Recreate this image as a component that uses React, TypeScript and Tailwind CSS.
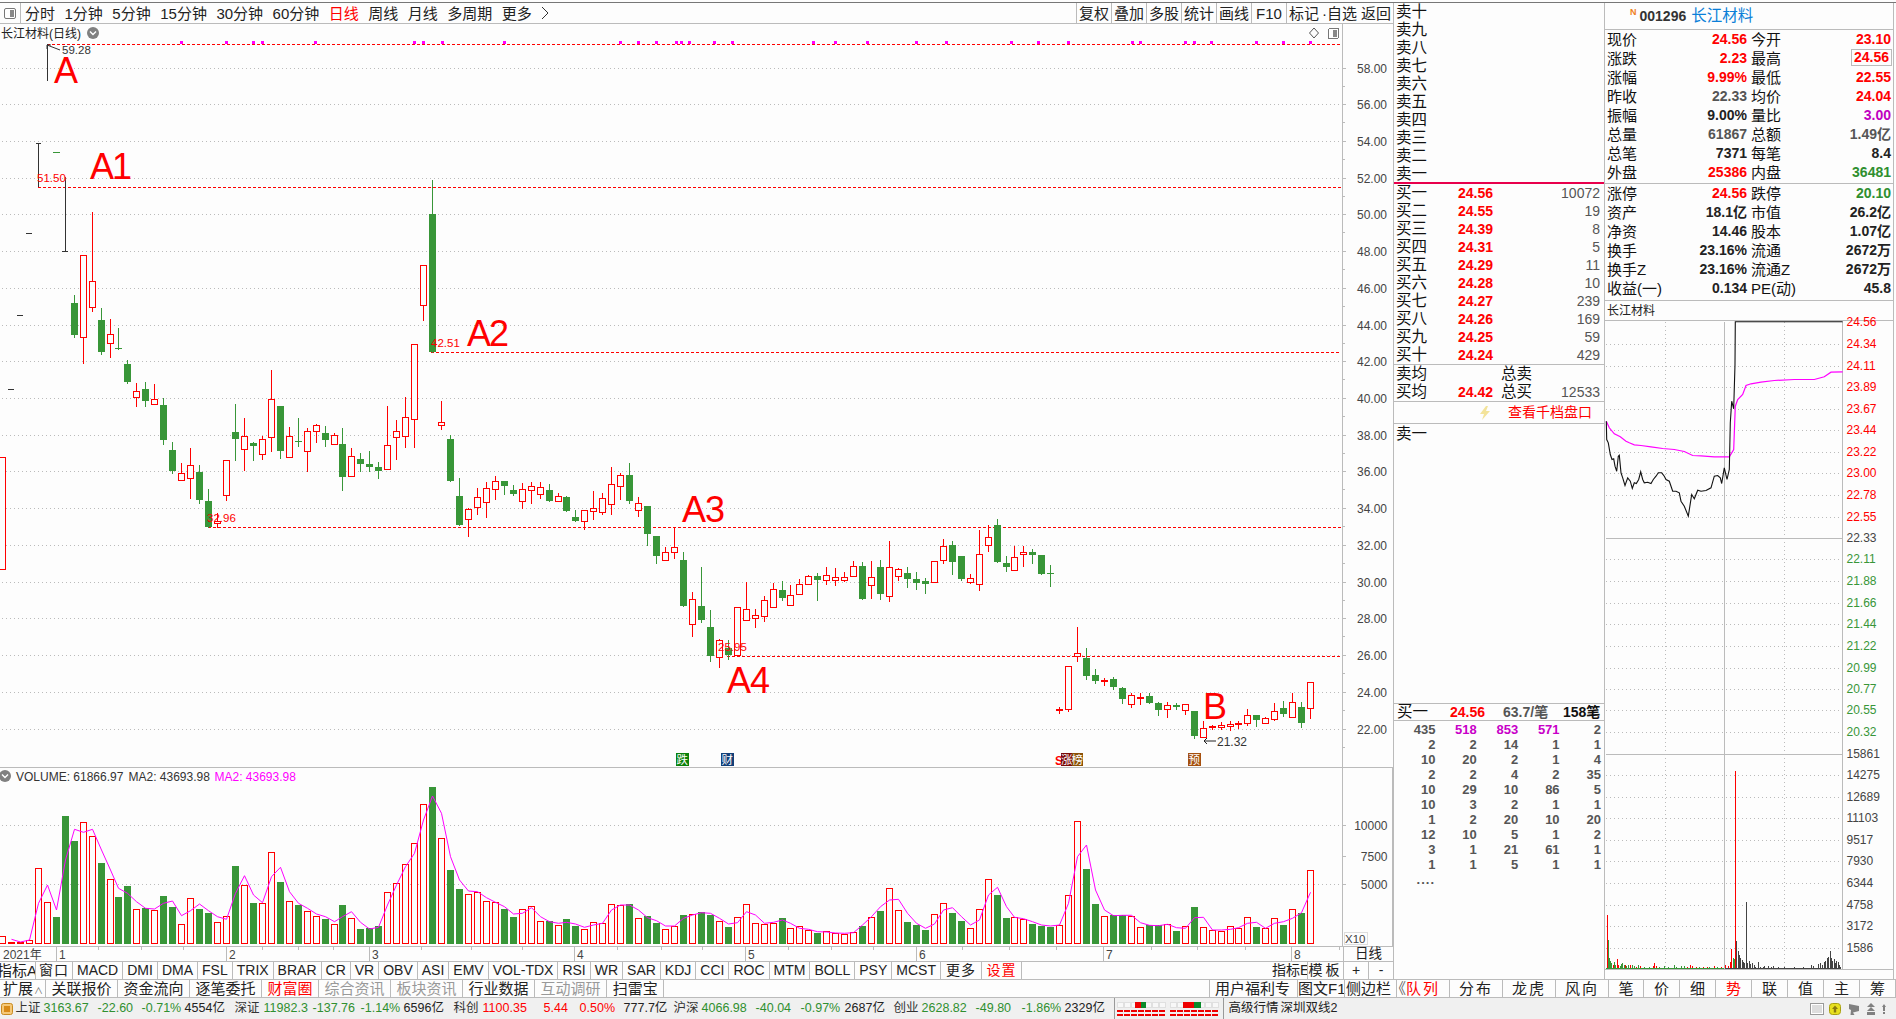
const RED = "#ff0000";
const GREEN = "#389638";
const DARK = "#444444";
const BG = "#fdfdfd";

type Candle = [string, number, number, number, number];

// each block: pixel y of the crop origin, first candle index, [kind, wick top, body top, body bottom, wick bottom] at 3x
const blocks: [number, number, Candle[]][] = [
  [170, 8, [
    ["g",375,400,495,500],["r",256,256,500,580],["r",127,334,410,422],["g",415,450,545,551],["r",447,492,520,560],["g",474,535,536,536],
    ["g",570,582,636,639],["r",640,664,680,707],["g",636,657,693,707],["r",642,688,703,703],["g",685,705,809,821],["g",817,840,903,908],
    ["r",880,910,931,931],["r",835,886,925,983],["g",885,906,990,998],["g",957,993,1071,1071],["r",1030,1053,1060,1070],["r",871,871,976,990],
    ["g",702,786,806,869],["r",745,799,838,900],["g",815,820,827,869],["r",799,808,853,866],["r",600,688,802,842],["g",708,708,842,863],
    ["r",771,799,862,862],["g",744,814,815,827],["r",775,784,844,903],["r",762,766,784,815],["g",769,789,809,827],["r",790,796,823,823],
    ["g",775,822,920,959],["r",835,859,919,919],["g",849,867,881,902],["g",843,882,890,902],["g",876,891,902,923],["r",708,826,898,898],
    ["r",750,784,802,866],["r",682,740,799,830],["r",523,523,748,830],["r",286,286,406,449],["g",30,132,545,546],["r",693,757,766,776],
    ["g",796,807,932,932],["g",924,978,1064,1064],["r",1015,1018,1048,1097],["r",955,982,1012,1031],
  ]],
  [340, 54, [
    ["r",427,445,485,531],["r",408,424,448,476],["g",423,423,437,462],["g",435,450,461,466],["r",430,448,484,504],["r",427,439,451,489],
    ["r",426,442,463,473],["g",432,450,482,484],["r",460,467,484,484],["g",468,472,512,513],["g",510,531,542,542],["r",511,511,544,566],
    ["r",453,503,514,537],["r",460,475,517,521],["r",381,433,493,521],["r",399,406,439,476],["g",369,405,483,489],["r",472,490,511,527],
    ["g",498,498,581,614],["g",588,588,648,668],["r",621,637,661,661],["r",563,622,637,653],["g",637,660,797,797],["r",756,778,853,887],
  ]],
  [480, 78, [
    ["g",262,378,420,425],["g",390,441,527,543],["r",478,481,530,560],["g",480,505,525,537],["r",382,382,524,524],["r",305,388,419,419],
    ["r",387,405,413,441],["r",349,361,409,422],["r",309,328,380,380],["g",304,330,354,360],["r",316,346,374,374],["r",297,313,343,343],
    ["r",285,289,313,313],["g",280,288,299,360],["r",262,286,301,311],["r",265,292,301,315],["r",276,290,299,302],["r",243,259,289,289],
    ["g",246,258,356,356],["r",243,292,316,354],["g",240,261,341,356],["r",183,262,349,362],
  ]],
  [510, 100, [
    ["r",174,178,199,211],["g",171,189,206,231],["g",186,207,219,237],["g",205,213,221,248],["r",152,154,217,217],["r",87,109,151,158],
    ["g",93,105,155,192],["g",138,138,207,209],["r",192,205,217,220],["r",60,133,223,239],["r",45,82,106,122],["g",27,45,155,155],
    ["g",138,160,170,182],["r",108,142,181,181],["r",108,127,133,167],["g",118,126,134,159],["g",135,135,191,191],["g",166,190,191,227],
    ["r",590,597,600,608],["r",469,469,596,602],["r",351,430,438,452],["g",414,444,497,506],["g",477,495,513,518],["r",503,510,514,524],
    ["g",502,507,530,537],["g",531,534,567,578],["r",549,556,581,590],["r",548,562,564,581],["g",549,558,578,578],["g",576,579,600,614],
    ["r",576,586,598,620],["g",580,586,590,598],["r",583,583,601,611],["g",603,603,678,683],["r",633,655,680,680],["r",645,648,652,657],
    ["r",636,645,650,656],["r",632,642,648,659],["r",634,639,643,654],["r",597,616,640,644],["g",616,616,630,647],["r",622,625,640,640],
    ["r",579,602,626,629],["g",573,595,611,618],["r",549,577,622,622],["g",576,591,638,651],["r",517,517,595,624],
  ]],
];

const candleX = (i: number) => Math.round(2 + 8.96 * i);

// volume bars: i = 0..146, top at 3x from y=760, negative means green
const vols = [529,547,547,541,325,427,-471,-168,-243,187,229,-309,358,-411,-378,448,-445,451,-408,-441,493,415,-447,-459,487,468,-318,376,-429,430,277,-366,424,-435,454,469,-477,493,-435,475,-507,-505,-498,397,370,313,250,133,-81,235,-330,-387,403,395,424,427,-447,-471,448,439,484,-483,495,-477,-498,508,487,490,433,436,-432,475,-468,-489,508,498,-465,463,-456,-465,484,-500,472,433,490,493,488,-474,505,499,511,-519,514,519,522,517,-498,472,-453,385,451,-486,-495,-510,463,430,-459,-483,505,448,358,-405,-474,472,476,-492,-497,-501,495,406,184,-327,-432,469,-465,-466,468,502,-496,-496,493,-513,498,-441,502,510,513,499,505,472,-501,505,475,-495,448,-459,331];

const volMa = [538,546,540,430,375,450,300,208,217,208,270,330,385,400,425,445,447,430,423,467,452,432,452,470,478,400,347,405,428,350,322,395,430,445,462,470,485,470,455,487,507,502,435,375,320,280,180,108,160,290,360,393,395,413,427,440,462,460,443,470,485,490,487,492,502,495,490,450,435,435,450,473,482,498,498,475,465,458,460,475,492,488,455,465,490,487,480,490,505,508,515,516,519,520,518,495,470,440,420,418,460,490,505,492,450,443,470,495,480,405,382,440,472,476,485,495,498,495,430,290,255,390,450,467,466,466,488,496,497,493,503,505,473,472,510,510,508,503,490,487,505,490,485,475,458,397];

const gridY = [68,104,141,178,214,251,288,325,361,398,435,471,508,545,582,618,655,692,729];
const priceLabels = ["58.00","56.00","54.00","52.00","50.00","48.00","46.00","44.00","42.00","40.00","38.00","36.00","34.00","32.00","30.00","28.00","26.00","24.00","22.00"];
const pinkMarks = [180,225,252,261,314,413,422,441,503,619,637,655,675,680,688,713,731,812,834,866,915,945,1010,1037,1067,1131,1139,1184,1193,1210,1255,1282,1309];

const bigMarks: [string, number, number][] = [["A",54,83],["A1",90,179],["A2",467,346],["A3",682,522],["A4",727,693],["B",1203,719]];

const toolbarItems = ["分时","1分钟","5分钟","15分钟","30分钟","60分钟","日线","周线","月线","多周期","更多"];
const toolbarRight = ["复权","叠加","多股","统计","画线","F10","标记"];

function PanelIcon({ x, y }: { x: number; y: number }) {
  return (
    <g shapeRendering="crispEdges">
      <rect x={x + 0.5} y={y + 0.5} width={10} height={10} rx={1.5} fill="#fff" stroke="#777" />
      <rect x={x + 5} y={y + 2} width={4} height={7} fill="#888" />
    </g>
  );
}

function Chevron({ cx, cy }: { cx: number; cy: number }) {
  return (
    <g>
      <circle cx={cx} cy={cy} r={6} fill="#808080" />
      <path d={`M${cx - 3} ${cy - 1.5}L${cx} ${cy + 1.5}L${cx + 3} ${cy - 1.5}`} stroke="#fff" strokeWidth={1.4} fill="none" />
    </g>
  );
}

function Candles() {
  const out: React.ReactNode[] = [];
  blocks.forEach(([origin, start, rows]) => {
    rows.forEach((c, n) => {
      const x = candleX(start + n);
      const y = (v: number) => Math.round(origin + v / 3);
      const [kind, w, t, b, l] = c;
      const color = kind === "g" ? GREEN : RED;
      out.push(
        <g key={start + n} shapeRendering="crispEdges">
          <line x1={x + 0.5} x2={x + 0.5} y1={y(w)} y2={y(l) + 1} stroke={color} />
          {kind === "g" ? (
            <rect x={x - 3} y={y(t)} width={7} height={Math.max(y(b) - y(t), 1)} fill={color} />
          ) : (
            <rect x={x - 2.5} y={y(t) + 0.5} width={6} height={Math.max(y(b) - y(t), 1)} fill={BG} stroke={color} />
          )}
        </g>
      );
    });
  });
  return <>{out}</>;
}

function KLine() {
  return (
    <svg className="block w-full h-[744px] shrink-0" viewBox="0 24 1393 744" shapeRendering="geometricPrecision">
      <text x={1} y={37.5} fontSize={12} fill="#222">长江材料(日线)</text>
      <Chevron cx={93} cy={33} />
      <path d="M1314 28L1318.5 33L1314 38L1309.5 33Z" fill="none" stroke="#555" />
      <PanelIcon x={1328} y={28} />
      <g shapeRendering="crispEdges">
        {gridY.map((y) => (
          <line key={y} x1={2} x2={1342} y1={y + 0.5} y2={y + 0.5} stroke="#bbb" strokeDasharray="1 3" />
        ))}
        {gridY.map((y, i) => (
          <g key={i}>
            <line x1={1343} x2={1346} y1={y + 0.5} y2={y + 0.5} stroke="#bbb" />
            <line x1={1343} x2={1345} y1={y + 18.5} y2={y + 18.5} stroke="#bbb" />
          </g>
        ))}
        <line x1={47} x2={1342} y1={44.5} y2={44.5} stroke={RED} strokeDasharray="3 2" />
        <line x1={38} x2={1342} y1={187.5} y2={187.5} stroke={RED} strokeDasharray="3 2" />
        <line x1={431} x2={1340} y1={352.5} y2={352.5} stroke={RED} strokeDasharray="3 2" />
        <line x1={208} x2={1342} y1={527.5} y2={527.5} stroke={RED} strokeDasharray="3 2" />
        <line x1={727} x2={1340} y1={656.5} y2={656.5} stroke={RED} strokeDasharray="3 2" />
        {pinkMarks.map((x) => (
          <rect key={x} x={x} y={41} width={3} height={3} fill="#ff00ff" />
        ))}
        <rect x={-2} y={457.5} width={7} height={112} fill={BG} stroke={RED} />
        <rect x={8} y={389} width={6} height={1} fill="#333" />
        <rect x={17} y={315} width={6} height={1} fill="#333" />
        <rect x={26} y={233} width={6} height={1} fill="#333" />
        <rect x={53} y={152} width={7} height={1} fill={GREEN} />
        <line x1={38.5} x2={38.5} y1={143} y2={187} stroke="#333" />
        <line x1={36} x2={41} y1={143.5} y2={143.5} stroke="#333" />
        <line x1={47.5} x2={47.5} y1={44} y2={81} stroke="#333" />
        <line x1={65.5} x2={65.5} y1={177} y2={251} stroke="#333" />
        <line x1={62} x2={68} y1={251.5} y2={251.5} stroke="#333" />
      </g>
      <Candles />
      <path d="M47 45L60 50M47 45L47 49M47 45L51 45" stroke="#333" fill="none" />
      <text x={62} y={54} fontSize={11.5} fill="#333">59.28</text>
      <text x={37} y={182} fontSize={11.5} fill={RED}>51.50</text>
      <text x={431} y={347} fontSize={11.5} fill={RED}>42.51</text>
      <text x={207} y={522} fontSize={11.5} fill={RED}>32.96</text>
      <text x={718} y={651} fontSize={11.5} fill={RED}>25.95</text>
      <path d="M1204 741H1216M1204 741L1207 738M1204 741L1207 744" stroke="#222" fill="none" />
      <text x={1217} y={746} fontSize={12} fill="#333">21.32</text>
      {bigMarks.map(([t, x, y]) => (
        <text key={t} x={x} y={y} fontSize={36} letterSpacing={t === "A1" || t === "A2" ? -2 : -1} fill={RED}>{t}</text>
      ))}
      <g fontSize={11.5} fill="#fff">
        <rect x={676} y={753} width={13} height={13} fill="#0a800a" />
        <text x={676.5} y={764}>跌</text>
        <rect x={721} y={753} width={13} height={13} fill="#123f78" />
        <text x={721.5} y={764}>财</text>
        <text x={1055} y={765} fontSize={12} fontWeight="bold" fill={RED}>S</text>
        <rect x={1061} y={753} width={11} height={13} fill="#7a0a0a" />
        <text x={1061} y={764}>涨</text>
        <rect x={1072} y={753} width={11} height={13} fill="#8a5208" />
        <text x={1071.5} y={764}>榜</text>
        <rect x={1188} y={753} width={13} height={13} fill="#a5500f" />
        <text x={1188.5} y={764}>预</text>
      </g>
      {priceLabels.map((p, i) => (
        <text key={p} x={1387} y={gridY[i] + 4.5} fontSize={12} textAnchor="end" fill="#444">{p}</text>
      ))}
      <line x1={1342.5} x2={1342.5} y1={24} y2={768} stroke="#bbb" shapeRendering="crispEdges" />
      <line x1={0} x2={1343} y1={767.5} y2={767.5} stroke="#bbb" shapeRendering="crispEdges" />
      <line x1={1343} x2={1393} y1={767.5} y2={767.5} stroke="#bbb" strokeWidth={2} shapeRendering="crispEdges" />
    </svg>
  );
}

function Volume() {
  const base = 944;
  const line = volMa.map((v, n) => `${candleX(n + 1) + 0.5},${(760 + v / 3).toFixed(1)}`).join(" ");
  return (
    <svg className="block w-full h-[178px] shrink-0" viewBox="0 768 1393 178">
      <Chevron cx={5} cy={776} />
      <text x={16} y={780.5} fontSize={12} fill="#333">VOLUME: 61866.97</text>
      <text x={128.5} y={780.5} fontSize={12} fill="#333">MA2: 43693.98</text>
      <text x={214.5} y={780.5} fontSize={12} fill="#ff00ff">MA2: 43693.98</text>
      <g shapeRendering="crispEdges">
        <line x1={2} x2={1342} y1={825.5} y2={825.5} stroke="#bbb" strokeDasharray="1 3" />
        <line x1={2} x2={1342} y1={884.5} y2={884.5} stroke="#bbb" strokeDasharray="1 3" />
        {vols.map((v, i) => {
          const x = candleX(i);
          const top = Math.round(760 + Math.abs(v) / 3);
          return v < 0 ? (
            <rect key={i} x={x - 3} y={top} width={7} height={base - top} fill={GREEN} />
          ) : (
            <rect key={i} x={x - 2.5} y={top + 0.5} width={6} height={base - top - 1} fill={BG} stroke={RED} />
          );
        })}
        <line x1={1342.5} x2={1342.5} y1={768} y2={946} stroke="#bbb" />
        <line x1={1343} x2={1346} y1={825.5} y2={825.5} stroke="#bbb" />
        <line x1={1343} x2={1346} y1={856.5} y2={856.5} stroke="#bbb" />
        <line x1={1343} x2={1346} y1={884.5} y2={884.5} stroke="#bbb" />
        <rect x={1344.5} y={932.5} width={23} height={12} fill="none" stroke="#ddd" />
        <rect x={1392} y={768} width={1} height={178} fill="#bbb" />
      </g>
      <polyline points={line} fill="none" stroke="#ff00ff" strokeWidth={1} />
      <text x={1387.5} y={830} fontSize={12} textAnchor="end" fill="#444">10000</text>
      <text x={1387.5} y={861} fontSize={12} textAnchor="end" fill="#444">7500</text>
      <text x={1387.5} y={888.5} fontSize={12} textAnchor="end" fill="#444">5000</text>
      <text x={1345} y={943} fontSize={11.5} fill="#444">X10</text>
    </svg>
  );
}

const monthTicks: [string, number][] = [["1",56],["2",226],["3",369],["4",574],["5",745],["6",916],["7",1103],["8",1291]];
const weekTicks = [98,141,183,262,298,333,421,471,522,617,661,702,788,831,873,962,1009,1056,1151,1197,1245,1339];

function DateAxis() {
  return (
    <div className="flex h-[16px] shrink-0 border-t border-b border-[#bbb]">
      <svg className="block w-[1343px] shrink-0 h-[14px]" viewBox="0 947 1343 14">
        <g shapeRendering="crispEdges" stroke="#bbb">
          {monthTicks.map(([, x]) => (
            <line key={x} x1={x + 0.5} x2={x + 0.5} y1={947} y2={961} />
          ))}
          {weekTicks.map((x) => (
            <line key={x} x1={x + 0.5} x2={x + 0.5} y1={947} y2={950} />
          ))}
        </g>
        <text x={3} y={958.5} fontSize={12} fill="#444">2021年</text>
        {monthTicks.map(([m, x]) => (
          <text key={m} x={x + 3} y={958.5} fontSize={12} fill="#444">{m}</text>
        ))}
      </svg>
      <div className="flex-1 border-l border-[#bbb] flex items-center justify-center text-[13.5px] leading-none text-[#222]">日线</div>
    </div>
  );
}

const indexTabs = ["MACD","DMI","DMA","FSL","TRIX","BRAR","CR","VR","OBV","ASI","EMV","VOL-TDX","RSI","WR","SAR","KDJ","CCI","ROC","MTM","BOLL","PSY","MCST"];

function IndexRow() {
  return (
    <div className="flex h-[17px] shrink-0 items-stretch text-[14px] leading-[17px] text-[#222] whitespace-nowrap overflow-hidden">
      <div className="w-[36px] shrink-0 flex justify-end overflow-hidden border-r border-[#bbb] text-[15px] pr-[0px]"><span className="-mr-[2px]">指标A</span></div>
      <div className="w-[37px] shrink-0 text-center border-r border-[#bbb] tracking-[1px]">窗口</div>
      {indexTabs.map((t) => (
        <div key={t} className="px-1 shrink-0 border-r border-[#bbb]">{t}</div>
      ))}
      <div className="w-[41px] shrink-0 text-center border-r border-[#bbb] tracking-[1px]">更多</div>
      <div className="w-[40px] shrink-0 text-center text-[#ff0000] border-r border-[#bbb] tracking-[1px]">设置</div>
      <div className="flex-1" />
      <div className="w-[36px] shrink-0 overflow-hidden border-r border-[#bbb]">指标E</div>
      <div className="w-[36px] shrink-0 text-center border-r border-[#bbb] tracking-[3px]">模板</div>
      <div className="w-[25px] shrink-0 text-center border-r border-[#bbb]">+</div>
      <div className="w-[24px] shrink-0 text-center">-</div>
    </div>
  );
}

const sellRows = ["卖十","卖九","卖八","卖七","卖六","卖五","卖四","卖三","卖二","卖一"];
const buyRows: [string, string, string][] = [
  ["买一","24.56","10072"],["买二","24.55","19"],["买三","24.39","8"],["买四","24.31","5"],["买五","24.29","11"],
  ["买六","24.28","10"],["买七","24.27","239"],["买八","24.26","169"],["买九","24.25","59"],["买十","24.24","429"],
];
const queue = [
  ["435","518","853","571","2"],["2","2","14","1","1"],["10","20","2","1","4"],["2","2","4","2","35"],["10","29","10","86","5"],
  ["10","3","2","1","1"],["1","2","20","10","20"],["12","10","5","1","2"],["3","1","21","61","1"],["1","1","5","1","1"],
];

function OrderBook() {
  return (
    <div className="w-[211px] shrink-0 border-l border-[#bbb] flex flex-col text-[15.5px]">
      <div className="pl-[2px] shrink-0">
        {sellRows.map((s) => (
          <div key={s} className="h-[18px] leading-[18px] text-[#111]">{s}</div>
        ))}
      </div>
      <div className="h-[2px] -mt-[1px] bg-[#e8004c] shrink-0" />
      {buyRows.map(([l, p, q]) => (
        <div key={l} className="h-[18px] leading-[18px] flex pl-[2px] pr-[4px] shrink-0">
          <span className="w-[62px] text-[#111]">{l}</span>
          <span className="text-[14px] font-bold text-[#ff0000]">{p}</span>
          <span className="flex-1 text-right text-[14px] text-[#555]">{q}</span>
        </div>
      ))}
      <div className="border-t border-[#bbb] shrink-0">
        <div className="h-[18px] leading-[18px] flex pl-[2px] pr-[4px]">
          <span className="w-[105px] text-[#111]">卖均</span>
          <span className="text-[#111]">总卖</span>
        </div>
        <div className="h-[18px] leading-[18px] flex pl-[2px] pr-[4px]">
          <span className="w-[62px] text-[#111]">买均</span>
          <span className="w-[43px] text-[14px] font-bold text-[#ff0000]">24.42</span>
          <span className="text-[#111]">总买</span>
          <span className="flex-1 text-right text-[14px] text-[#555]">12533</span>
        </div>
      </div>
      <div className="h-[23px] shrink-0 border-t border-b border-[#bbb] flex items-center pl-[85px] text-[14px] text-[#ff0000]">
        <svg width="12" height="14" viewBox="0 0 12 14" className="mr-[17px]">
          <path d="M7 0L1 8H5L3 14L11 5H7L9 0Z" fill="#f3e39a" />
        </svg>
        查看千档盘口
      </div>
      <div className="flex-1 pl-[2px] leading-[20px] text-[#111]">卖一</div>
      <div className="h-[18px] shrink-0 border-t border-b border-b-dotted border-[#bbb] flex items-center pl-[3px] text-[14px] font-bold leading-none">
        <span className="w-[53px] font-normal text-[15.5px] text-[#111]">买一</span>
        <span className="w-[53px] text-[#ff0000]">24.56</span>
        <span className="w-[60px] text-[#555]">63.7/笔</span>
        <span className="text-[#111]">158笔</span>
      </div>
      <div className="h-[258px] shrink-0 text-[13px] font-bold text-[#555] leading-[15px] pt-[1px]">
        {queue.map((row, i) => (
          <div key={i} className="grid grid-cols-5 w-[207px] h-[15px] text-right">
            {row.map((v, j) => (
              <span key={j} className={i === 0 && j > 0 && j < 4 ? "text-[#c800c8]" : ""}>{v}</span>
            ))}
          </div>
        ))}
        <div className="w-[41px] text-right tracking-[1px]">....</div>
      </div>
    </div>
  );
}

const R = "text-[#ff0000]";
const G = "text-[#2f8f2f]";
const K = "text-[#222]";
const S = "text-[#555]";
const P = "text-[#c000c0]";

const quoteTop: [string, string, string, string, string, string][] = [
  ["现价","24.56",R,"今开","23.10",R],
  ["涨跌","2.23",R,"最高","24.56",R],
  ["涨幅","9.99%",R,"最低","22.55",R],
  ["昨收","22.33",S,"均价","24.04",R],
  ["振幅","9.00%",K,"量比","3.00",P],
  ["总量","61867",S,"总额","1.49亿",S],
  ["总笔","7371",K,"每笔","8.4",K],
  ["外盘","25386",R,"内盘","36481",G],
];
const quoteBottom: [string, string, string, string, string, string][] = [
  ["涨停","24.56",R,"跌停","20.10",G],
  ["资产","18.1亿",K,"市值","26.2亿",K],
  ["净资","14.46",K,"股本","1.07亿",K],
  ["换手","23.16%",K,"流通","2672万",K],
  ["换手Z","23.16%",K,"流通Z","2672万",K],
  ["收益(一)","0.134",K,"PE(动)","45.8",K],
];

function QuoteRows({ rows }: { rows: [string, string, string, string, string, string][] }) {
  return (
    <>
      {rows.map(([a, av, ac, b, bv, bc]) => (
        <div key={a} className="h-[19px] leading-[19px] flex pl-[2px] gap-[4px] text-[15px] text-[#111]">
          <div className="w-[140px] flex justify-between">
            <span>{a}</span>
            <span className={`text-[14px] font-bold ${ac}`}>{av}</span>
          </div>
          <div className="w-[140px] flex justify-between">
            <span>{b}</span>
            <span className={b === "最高" ? `text-[14px] font-bold ${bc} border border-[#bbb] leading-[15px] px-[2px] -mr-[1px] h-[17px]` : `text-[14px] font-bold ${bc}`}>{bv}</span>
          </div>
        </div>
      ))}
    </>
  );
}

const miniAxis: [string, number, string][] = [
  ["24.56",322,RED],["24.34",344,RED],["24.11",366,RED],["23.89",387,RED],["23.67",409,RED],["23.44",430,RED],["23.22",452,RED],["23.00",473,RED],["22.78",495,RED],["22.55",517,RED],
  ["22.33",538,"#444"],
  ["22.11",559,GREEN],["21.88",581,GREEN],["21.66",603,GREEN],["21.44",624,GREEN],["21.22",646,GREEN],["20.99",668,GREEN],["20.77",689,GREEN],["20.55",710,GREEN],["20.32",732,GREEN],
  ["15861",754,"#444"],["14275",775,"#444"],["12689",797,"#444"],["11103",818,"#444"],["9517",840,"#444"],["7930",861,"#444"],["6344",883,"#444"],["4758",905,"#444"],["3172",926,"#444"],["1586",948,"#444"],
];

const priceLine: [number, number][] = [[16,365],[17,420],[22,430],[28,465],[33,480],[38,478],[42,500],[47,515],[52,470],[55,467],[60,520],[65,535],[72,558],[80,535],[88,545],[94,567],[100,550],[106,552],[113,540],[119,517],[125,540],[130,550],[140,548],[150,552],[157,540],[165,530],[172,520],[182,520],[190,530],[195,540],[205,545],[215,575],[225,575],[235,580],[240,605],[250,620],[262,650],[272,585],[280,598],[290,572],[300,575],[315,573],[330,565],[340,530],[350,528],[358,535],[362,552],[370,505],[378,540],[385,510],[388,370],[392,305],[398,328],[402,195],[403,67],[725,67]];
const avgLine: [number, number][] = [[16,365],[25,385],[40,403],[58,412],[75,425],[85,430],[100,436],[120,438],[150,442],[185,447],[220,450],[250,456],[275,468],[300,469],[340,472],[385,472],[398,450],[403,320],[410,300],[425,285],[435,258],[450,253],[480,248],[520,243],[580,240],[640,240],[670,232],[690,218],[725,217]];

const toPts = (pts: [number, number][]) => pts.map(([x, y]) => `${(1600 + x / 3).toFixed(1)},${(300 + y / 3).toFixed(1)}`).join(" ");

// minute volume: [x at 3x from 1380, height at 3x, colour]
const miniVol: [number, number, string][] = [
  [677,160,RED],[680,85,GREEN],[684,30,GREEN],[687,20,GREEN],[691,14,GREEN],[695,10,RED],[699,18,GREEN],[703,8,GREEN],[708,27,RED],[712,10,RED],[716,6,GREEN],[720,13,GREEN],[724,14,GREEN],[728,10,GREEN],[732,8,RED],[736,6,GREEN],[742,8,GREEN],[748,10,RED],[752,8,GREEN],[758,5,GREEN],[765,4,RED],[772,8,GREEN],[778,5,RED],[790,4,GREEN],[805,4,GREEN],[815,6,RED],[820,14,RED],[826,5,RED],[835,4,GREEN],[850,6,GREEN],[860,3,GREEN],[878,10,GREEN],[885,4,GREEN],[900,5,GREEN],[908,5,GREEN],[918,4,RED],[928,8,RED],[932,5,RED],[945,4,RED],[955,3,GREEN],[965,4,RED],[978,4,RED],[985,3,GREEN],[998,5,RED],[1008,3,GREEN],[1020,3,RED],
  [1033,10,RED],[1040,6,RED],[1047,18,RED],[1051,58,RED],[1055,30,GREEN],[1058,28,GREEN],[1063,590,RED],[1066,80,DARK],[1070,50,DARK],[1074,38,DARK],[1078,30,DARK],[1082,24,DARK],[1086,18,DARK],[1090,14,DARK],[1094,197,DARK],[1098,16,DARK],[1103,20,DARK],[1108,12,DARK],[1113,15,DARK],[1118,10,DARK],[1123,4,DARK],[1130,18,DARK],[1136,4,DARK],[1145,3,DARK],[1150,5,DARK],[1160,6,DARK],[1170,3,DARK],[1175,5,DARK],[1190,3,DARK],[1210,3,DARK],[1238,3,DARK],[1265,2,DARK],[1290,8,DARK],[1297,5,DARK],[1312,12,DARK],[1317,14,DARK],[1323,10,DARK],[1328,18,DARK],[1333,22,DARK],[1338,30,DARK],[1342,34,DARK],[1346,50,DARK],[1350,30,DARK],[1354,22,DARK],[1358,26,DARK],[1362,15,DARK],[1366,22,DARK],[1370,18,DARK],[1374,10,DARK],[1378,4,DARK],
];

function MiniChart() {
  return (
    <svg className="block w-[289px] flex-1 overflow-visible" viewBox="1604 322 289 657">
      <g shapeRendering="crispEdges">
        {miniAxis.map(([l, y]) =>
          y === 322 || y === 538 || y === 754 ? null : (
            <line key={l} x1={1605} x2={1841} y1={y + 0.5} y2={y + 0.5} stroke="#bbb" strokeDasharray="1 3" />
          )
        )}
        <line x1={1664.5} x2={1664.5} y1={322} y2={969} stroke="#bbb" strokeDasharray="1 3" />
        <line x1={1783.5} x2={1783.5} y1={322} y2={969} stroke="#bbb" strokeDasharray="1 3" />
        <line x1={1723.5} x2={1723.5} y1={322} y2={969} stroke="#bbb" />
        <line x1={1605} x2={1841} y1={538.5} y2={538.5} stroke="#bbb" />
        <line x1={1605} x2={1841} y1={754.5} y2={754.5} stroke="#bbb" />
        <line x1={1841.5} x2={1841.5} y1={322} y2={969} stroke="#bbb" />
        <line x1={1604} x2={1893} y1={969.5} y2={969.5} stroke="#bbb" />
        {miniVol.map(([x, h, c]) => (
          <rect key={x} x={Math.round(1380 + x / 3)} y={969 - Math.round(h / 3) - 1} width={1} height={Math.max(Math.round(h / 3), 1)} fill={c} />
        ))}
        <line x1={1605} x2={1723} y1={968.5} y2={968.5} stroke={GREEN} />
        <line x1={1724} x2={1840} y1={968.5} y2={968.5} stroke={DARK} />
      </g>
      <polyline points={toPts(avgLine)} fill="none" stroke="#ff00ff" strokeWidth={1.2} />
      <polyline points={toPts(priceLine)} fill="none" stroke="#111" strokeWidth={1.1} />
      {miniAxis.map(([l, y, c]) => (
        <text key={l} x={1845.5} y={y + 4.5} fontSize={12} fill={c}>{l}</text>
      ))}
    </svg>
  );
}

function QuotePanel() {
  return (
    <div className="w-[290px] shrink-0 border-l border-r border-[#bbb] flex flex-col">
      <div className="h-[27px] shrink-0 border-b border-[#bbb] flex items-center pl-[25px] leading-none">
        <span className="text-[9px] font-bold text-[#f08020] -mt-[8px] mr-[3px]">N</span>
        <span className="text-[14px] font-bold text-[#333] mr-[5px]">001296</span>
        <span className="text-[15.5px] text-[#0a7fd8]">长江材料</span>
      </div>
      <div className="h-[154px] shrink-0 border-b border-[#bbb]">
        <QuoteRows rows={quoteTop} />
      </div>
      <div className="h-[117px] shrink-0 border-b border-[#bbb]">
        <QuoteRows rows={quoteBottom} />
      </div>
      <div className="h-[20px] shrink-0 border-b border-[#bbb] flex items-center pl-[2px] text-[12px] text-[#222]">长江材料</div>
      <MiniChart />
    </div>
  );
}

const extTabs: [string, string][] = [
  ["关联报价","text-[#222]"],["资金流向","text-[#222]"],["逐笔委托","text-[#222]"],["财富圈","text-[#ff0000]"],["综合资讯","text-[#999]"],
  ["板块资讯","text-[#999]"],["行业数据","text-[#222]"],["互动调研","text-[#999]"],["扫雷宝","text-[#222]"],
];
const sideTabs = ["分布","龙虎","风向"];
const timeTabs = ["笔","价","细","势","联","值","主"];

function ExtRow() {
  return (
    <div className="flex h-[19px] shrink-0 border-t border-b border-[#bbb] text-[15px] leading-[17px] whitespace-nowrap overflow-hidden">
      <div className="w-[46px] shrink-0 pl-[3px] border-r border-[#bbb] text-[#222]">
        扩展<span className="text-[9px] text-[#666] ml-[1px]">∧</span>
      </div>
      {extTabs.map(([t, c]) => (
        <div key={t} className={`shrink-0 px-[5.5px] border-r border-[#bbb] ${c}`}>{t}</div>
      ))}
      <div className="flex-1" />
      <div className="w-[88px] shrink-0 overflow-hidden border-l border-[#bbb] pl-[5px] text-[#222]">用户福利专</div>
      <div className="w-[47px] shrink-0 border-l border-[#bbb] text-center text-[#222]">图文F1</div>
      <div className="w-[52px] shrink-0 border-l border-[#bbb] pl-[1px] text-[#222]">侧边栏<span className="text-[#666]">《</span></div>
      <div className="w-[53px] shrink-0 border-l border-[#bbb] text-center tracking-[2px] text-[#ff0000]">队列</div>
      {sideTabs.map((t) => (
        <div key={t} className="w-[53px] shrink-0 border-l border-[#bbb] text-center tracking-[2px] text-[#222]">{t}</div>
      ))}
      <div className="w-[35px] shrink-0 border-l border-[#bbb] text-center text-[#222]">笔</div>
      {timeTabs.slice(1).map((t) => (
        <div key={t} className={`w-[36px] shrink-0 border-l border-[#bbb] text-center ${t === "势" ? "text-[#ff0000]" : "text-[#222]"}`}>{t}</div>
      ))}
      <div className="w-[37px] shrink-0 border-l border-r border-[#bbb] text-center text-[#222]">筹</div>
    </div>
  );
}

const Gt = "text-[#2f8f2f]";
const Rt = "text-[#ff0000]";
const Kt = "text-[#222]";
const Lt = "text-[#333]";

const statusCells: [string, string, string][] = [
  ["上证",Lt,"w-[28px]"],["3163.67",Gt,"w-[54px]"],["-22.60",Gt,"w-[44px]"],["-0.71%",Gt,"w-[43px]"],["4554亿",Kt,"w-[50px]"],
  ["深证",Lt,"w-[29px]"],["11982.3",Gt,"w-[49px]"],["-137.76",Gt,"w-[48px]"],["-1.14%",Gt,"w-[43px]"],["6596亿",Kt,"w-[50px]"],
  ["科创",Lt,"w-[29px]"],["1100.35",Rt,"w-[61px]"],["5.44",Rt,"w-[36px]"],["0.50%",Rt,"w-[44px]"],["777.7亿",Kt,"w-[50px]"],
  ["沪深",Lt,"w-[28px]"],["4066.98",Gt,"w-[54px]"],["-40.04",Gt,"w-[45px]"],["-0.97%",Gt,"w-[44px]"],["2687亿",Kt,"w-[49px]"],
  ["创业",Lt,"w-[28px]"],["2628.82",Gt,"w-[54px]"],["-49.80",Gt,"w-[46px]"],["-1.86%",Gt,"w-[43px]"],["2329亿",Kt,"w-[49px]"],
];

function Breadth() {
  const dashes = [0,1,2,3,4,5,6];
  return (
    <svg width="104" height="16" viewBox="0 0 104 16" className="shrink-0" shapeRendering="crispEdges">
      {[0, 53].map((ox) => (
        <g key={ox}>
          {dashes.map((d) => (
            <g key={d}>
              <rect x={ox + d * 7} y={1} width={6} height={5} fill="#f8f8f8" stroke="#e0e0e0" />
              <rect x={ox + d * 7} y={9} width={6} height={2} fill="#ee0000" />
              <rect x={ox + d * 7} y={13} width={6} height={2} fill="#ee0000" />
            </g>
          ))}
        </g>
      ))}
      <rect x={18} y={1} width={6} height={6} fill="#ee0000" />
      <rect x={24} y={1} width={5} height={6} fill="#0a8a2a" />
      <rect x={66} y={1} width={11} height={6} fill="#ee0000" />
      <rect x={77} y={1} width={7} height={6} fill="#0a8a2a" />
    </svg>
  );
}

function StatusBar() {
  return (
    <div className="flex h-[21px] items-center bg-[#f0f0f0] text-[12.5px] leading-none whitespace-nowrap overflow-hidden">
      <div className="w-[15.6px] shrink-0 pl-[1px]">
        <svg width="12" height="12" viewBox="0 0 12 12" className="block">
          <rect x="0.5" y="0.5" width="11" height="11" rx="2" fill="#f5c878" stroke="#c88a20" />
          <rect x="3" y="3" width="6" height="6" fill="#d88a18" />
        </svg>
      </div>
      {statusCells.map(([t, c, w], i) => (
        <span key={i} className={`shrink-0 ${w} ${c}`}>{t}</span>
      ))}
      <div className="w-[1px] h-[21px] bg-[#999] shrink-0" />
      <div className="px-[2px] shrink-0"><Breadth /></div>
      <div className="w-[1px] h-[21px] bg-[#999] shrink-0" />
      <span className="shrink-0 ml-[5px] w-[52px] text-[#222]">高级行情</span>
      <span className="shrink-0 text-[#222]">深圳双线2</span>
      <div className="flex-1" />
      <div className="flex items-center pr-[10px]">
        <svg width="14" height="12" viewBox="0 0 14 12" className="block">
          <rect x="0.5" y="0.5" width="13" height="11" fill="#fff" stroke="#999" />
          <path d="M2 3H12M2 5H12M2 7H12M2 9H12" stroke="#bbb" />
        </svg>
        <svg width="12" height="12" viewBox="0 0 12 12" className="block ml-[5px]">
          <rect x="0.5" y="0.5" width="11" height="11" rx="3" fill="#e8e020" stroke="#a8a010" />
          <path d="M6 2.5L9 6H7.2V9.5H4.8V6H3Z" fill="#8a7a10" />
        </svg>
        <svg width="12" height="12" viewBox="0 0 12 12" className="block ml-[7px]">
          <path d="M1 1L11 3V8L5 9.5L6.5 12H2.5L3 7L1 6Z" fill="#808080" />
        </svg>
        <svg width="8" height="12" viewBox="0 0 8 12" className="block ml-[7px]">
          <path d="M4 0L8 4H0ZM4 4L8 8H0ZM0 9H8V12H0Z" fill="#808080" />
        </svg>
        <svg width="4" height="10" viewBox="0 0 4 10" className="block ml-[7px]">
          <path d="M2 0L4 3H3V7H1V3H0ZM1 8H3V10H1Z" fill="#808080" />
        </svg>
      </div>
    </div>
  );
}

export default function App() {
  return (
    <div className="w-[1896px] h-[1019px] flex flex-col overflow-hidden bg-[#fdfdfd] pt-[2px] font-['Liberation_Sans','Noto_Sans_CJK_SC',sans-serif]">
      <div className="flex flex-1 min-h-0 border-t border-[#777]">
        <div className="w-[1393px] shrink-0 flex flex-col">
          <div className="flex h-[21px] shrink-0 items-center border-b border-[#bbb] text-[15px] leading-none text-[#222] whitespace-nowrap">
            <div className="w-[21px] h-full shrink-0 border-r border-[#bbb] flex items-center justify-center">
              <svg width="12" height="11" viewBox="0 0 12 11">
                <rect x="0.5" y="0.5" width="11" height="10" rx="1.5" fill="#fff" stroke="#777" />
                <rect x="6" y="2" width="4" height="7" fill="#888" />
              </svg>
            </div>
            <div className="flex gap-[9.5px] pl-[4px]">
              {toolbarItems.map((t) => (
                <span key={t} className={t === "日线" ? "text-[#ff0000]" : ""}>{t}</span>
              ))}
              <svg width="8" height="14" viewBox="0 0 8 14">
                <path d="M1 1L7 7L1 13" fill="none" stroke="#333" />
              </svg>
            </div>
            <div className="flex-1" />
            {toolbarRight.map((t) => (
              <div key={t} className="w-[35px] h-full shrink-0 border-l border-[#bbb] flex items-center justify-center">{t}</div>
            ))}
            <div className="shrink-0 pl-[1px] pr-[1px]">·自选</div>
            <div className="shrink-0 pr-[2px] pl-[3px]">返回</div>
          </div>
          <KLine />
          <Volume />
          <DateAxis />
          <IndexRow />
        </div>
        <OrderBook />
        <QuotePanel />
      </div>
      <ExtRow />
      <StatusBar />
    </div>
  );
}
